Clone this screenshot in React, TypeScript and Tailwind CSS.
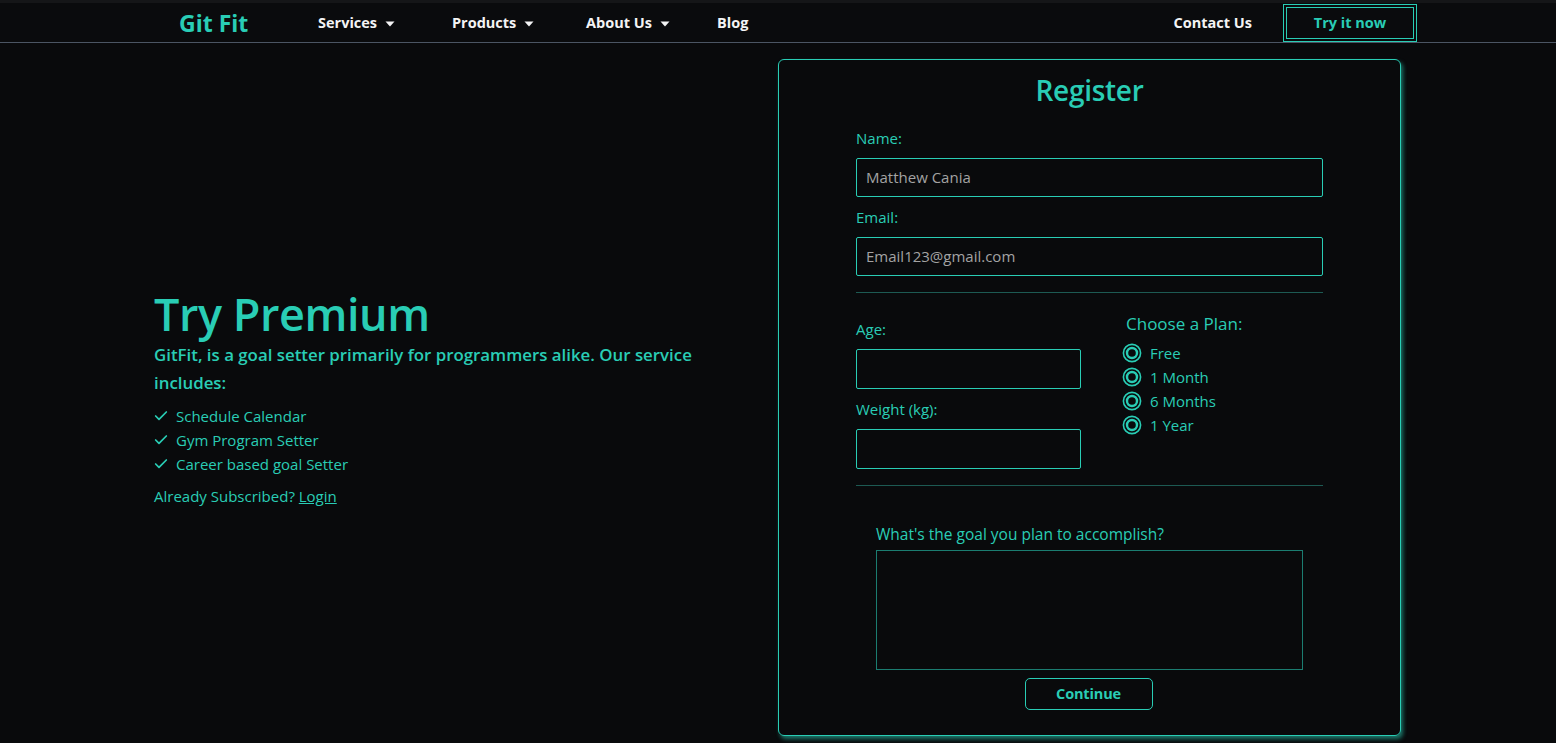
import React from "react";
import { Check } from "lucide-react";

const Caret = () => (
  <svg width="10" height="6" viewBox="0 0 10 6" className="ml-[8px] mt-[1px]">
    <path d="M0.5 0.5 L9.5 0.5 L5 5.5 Z" fill="#f4f4f5" />
  </svg>
);

const Radio = ({ label }: { label: string }) => (
  <div className="flex items-center h-[24px]">
    <svg width="20" height="20" viewBox="0 0 20 20" className="ml-[-4px]">
      <circle cx="10" cy="10" r="8.6" fill="none" stroke="#29cdb5" strokeWidth="1.6" />
      <circle cx="10" cy="10" r="5" fill="none" stroke="#29cdb5" strokeWidth="2.4" />
    </svg>
    <span className="ml-[8px] text-[15px] leading-[24px]">{label}</span>
  </div>
);

export default function App() {
  return (
    <div
      className="min-h-[743px] bg-[#090a0c] text-[#29cdb5]"
      style={{ fontFamily: '"Open Sans", "Noto Sans", sans-serif' }}
    >
      {/* NAV */}
      <nav className="h-[43px] border-t-[3px] border-t-[#151618] border-b border-b-[#4b5563] bg-[#0a0b0d] flex items-center">
        <div className="pl-[179px] w-[318px] text-[23px] font-bold leading-none text-[#29cdb5] pt-[2px]">
          Git Fit
        </div>
        <div className="flex items-center text-[14.5px] font-bold text-[#f4f4f5] pt-[1px]">
          <div className="w-[134px] flex items-center">
            Services <Caret />
          </div>
          <div className="w-[134px] flex items-center">
            Products <Caret />
          </div>
          <div className="w-[131px] flex items-center">
            About Us <Caret />
          </div>
          <div>Blog</div>
        </div>
        <div className="ml-auto flex items-center mr-[142px]">
          <span className="text-[14.5px] font-bold text-[#f4f4f5] pt-[1px]">Contact Us</span>
          <button className="ml-[34px] w-[128px] h-[32px] border border-[#29cdb5] outline outline-1 outline-offset-2 outline-[#29cdb5] text-[14.5px] font-bold text-[#29cdb5]">
            Try it now
          </button>
        </div>
      </nav>

      {/* MAIN */}
      <main className="flex items-center pt-[16px] pb-[8px]">
        <div className="w-[778px] pl-[154px]">
          <h1 className="text-[45px] font-semibold leading-[54px] tracking-[-0.01em]">Try Premium</h1>
          <p className="text-[16.85px] font-semibold leading-[28px] w-[570px]">
            GitFit, is a goal setter primarily for programmers alike. Our service includes:
          </p>
          <ul className="mt-[7px] text-[15px] leading-[24px]">
            {["Schedule Calendar", "Gym Program Setter", "Career based goal Setter"].map((t) => (
              <li key={t} className="flex items-center">
                <Check size={16} strokeWidth={2.6} className="mr-[7px] ml-[-1px]" />
                {t}
              </li>
            ))}
          </ul>
          <p className="mt-[8px] text-[15px] leading-[24px]">
            Already Subscribed? <span className="underline">Login</span>
          </p>
        </div>

        <div className="w-[623px] h-[677px] border border-[#29cdb5] rounded-[6px] shadow-[2px_3px_4px_rgba(41,205,181,0.55)] px-[77px] pt-[10px]">
          <h2 className="text-center text-[28px] font-semibold leading-[40px] tracking-[-0.01em]">Register</h2>
          <div className="mt-[18px] text-[15px] leading-[20px]">Name:</div>
          <div className="mt-[10px] h-[39px] border border-[#29cdb5] rounded-[2px] flex items-center px-[9px] text-[15px] text-[#a3a3a3]">
            Matthew Cania
          </div>
          <div className="mt-[10px] text-[15px] leading-[20px]">Email:</div>
          <div className="mt-[10px] h-[39px] border border-[#29cdb5] rounded-[2px] flex items-center px-[9px] text-[15px] text-[#a3a3a3]">
            Email123@gmail.com
          </div>
          <div className="mt-[16px] h-px bg-[#1d5a53]" />

          <div className="flex">
            <div className="w-[225px]">
              <div className="mt-[26px] text-[15px] leading-[20px]">Age:</div>
              <div className="mt-[10px] h-[40px] border border-[#29cdb5] rounded-[2px]" />
              <div className="mt-[10px] text-[15px] leading-[20px]">Weight (kg):</div>
              <div className="mt-[10px] h-[40px] border border-[#29cdb5] rounded-[2px]" />
            </div>
            <div className="ml-[45px] pt-[20px]">
              <div className="text-[17px] leading-[22px]">Choose a Plan:</div>
              <div className="mt-[6px]">
                {["Free", "1 Month", "6 Months", "1 Year"].map((l) => (
                  <Radio key={l} label={l} />
                ))}
              </div>
            </div>
          </div>

          <div className="mt-[16px] h-px bg-[#1d5a53]" />

          <div className="px-[20px]">
            <div className="mt-[38px] text-[15.5px] leading-[20px]">What's the goal you plan to accomplish?</div>
            <div className="mt-[6px] h-[120px] border border-[#1b7d71]" />
          </div>
          <div className="flex justify-center mt-[8px]">
            <button className="w-[128px] h-[32px] border border-[#29cdb5] rounded-[5px] text-[14.5px] font-bold tracking-[-0.01em] ml-[-2px]">
              Continue
            </button>
          </div>
        </div>
      </main>
    </div>
  );
}
